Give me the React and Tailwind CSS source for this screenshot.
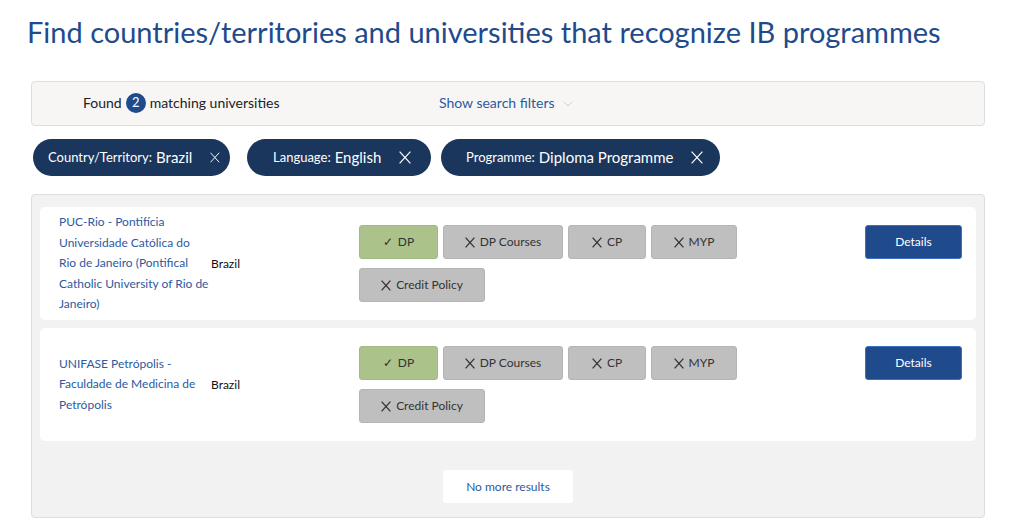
import { ChevronDown } from "lucide-react";

const results = [
  {
    lines: ["PUC-Rio - Pontifícia", "Universidade Católica do", "Rio de Janeiro (Pontifical", "Catholic University of Rio de", "Janeiro)"],
    country: "Brazil",
  },
  {
    lines: ["UNIFASE Petrópolis -", "Faculdade de Medicina de", "Petrópolis"],
    country: "Brazil",
  },
];

const tags = [
  { label: "DP", ok: true, w: "w-[79px]" },
  { label: "DP Courses", ok: false, w: "w-[120px]" },
  { label: "CP", ok: false, w: "w-[78px]" },
  { label: "MYP", ok: false, w: "w-[86px]" },
  { label: "Credit Policy", ok: false, w: "w-[126px]" },
];

function Cross({ w = 10, h = 11, stroke = 1.2, className = "" }) {
  return (
    <svg width={w} height={h} viewBox={`0 0 ${w} ${h}`} className={className} fill="none" stroke="currentColor" strokeWidth={stroke}>
      <path d={`M0.6 0.6 L${w - 0.6} ${h - 0.6} M${w - 0.6} 0.6 L0.6 ${h - 0.6}`} />
    </svg>
  );
}

function Tag({ tag }) {
  return (
    <div
      className={`${tag.w} h-[34px] flex items-center justify-center gap-[5px] rounded-[3px] border text-[12px] text-[#333] ${
        tag.ok ? "bg-[#abc28b] border-[#a3bb82]" : "bg-[#bfbfbf] border-[#b4b4b4]"
      }`}
    >
      {tag.ok ? <span className="text-[12px]">✓</span> : <Cross w={10} h={11} stroke={1.3} />}
      <span>{tag.label}</span>
    </div>
  );
}

function Pill({ label, value, className = "" }) {
  return (
    <div className={`h-[37px] flex items-center rounded-full bg-[#1b365d] text-white pl-[15px] pr-[10px] ${className}`}>
      <span className="text-[13px]">{label}:</span>
      <span className="text-[15px] ml-[4px]">{value}</span>
      <Cross w={12} h={13} stroke={1.2} className="ml-[18px]" />
    </div>
  );
}

export default function App() {
  return (
    <div className="w-[1024px] h-[528px] bg-white overflow-hidden font-['Lato',sans-serif]">
      <h1 className="pl-[27px] pt-[13px] text-[29px] leading-[37px] text-[#1f4b8c]">
        Find countries/territories and universities that recognize IB programmes
      </h1>

      <div className="w-[954px] ml-[31px] mt-[31px] h-[45px] flex items-center rounded-[4px] border border-[#dedede] bg-[#f7f6f5]">
        <div className="pl-[51px] w-[407px] flex items-center text-[14px] text-[#222] -mt-[2px]">
          <span>Found</span>
          <span className="mx-[4px] w-[20px] h-[20px] rounded-full bg-[#1f4b8c] text-white text-[13px] flex items-center justify-center">2</span>
          <span>matching universities</span>
        </div>
        <div className="flex items-center text-[14px] text-[#2c5aa0] -mt-[2px]">
          <span>Show search filters</span>
          <ChevronDown size={16} strokeWidth={1.2} className="ml-[5px] mt-[3px] text-[#c4c4c4]" />
        </div>
      </div>

      <div className="flex items-center ml-[33px] mt-[13px]">
        <Pill label="Country/Territory" value="Brazil" className="w-[197px]" />
        <Pill label="Language" value="English" className="ml-[17px] w-[184px] pl-[26px]" />
        <Pill label="Programme" value="Diploma Programme" className="ml-[10px] w-[279px] pl-[25px]" />
      </div>

      <div className="w-[954px] ml-[31px] mt-[18px] h-[324px] rounded-[4px] border border-[#dddddd] bg-[#f2f2f2] px-[8px] pt-[12px]">
        <div className="flex flex-col gap-[8px]">
          {results.map((r) => (
            <div key={r.lines[0]} className="h-[113px] bg-white rounded-[5px] flex items-center pl-[19px] pr-[14px]">
              <div className="w-[152px] text-[12px] leading-[20.5px] text-[#2c5aa0]">
                {r.lines.map((l) => (
                  <div key={l} className="whitespace-nowrap">{l}</div>
                ))}
              </div>
              <div className="w-[148px] text-[12px] text-[#111]">{r.country}</div>
              <div className="w-[390px] flex flex-wrap gap-x-[5px] gap-y-[9px] self-start mt-[18px]">
                {tags.map((t) => (
                  <Tag key={t.label} tag={t} />
                ))}
              </div>
              <div className="flex-1 flex justify-end self-start mt-[18px]">
                <button className="w-[97px] h-[34px] rounded-[3px] bg-[#1f4b8c] border border-[#3c6fbf] text-white text-[12px]">
                  Details
                </button>
              </div>
            </div>
          ))}
        </div>
        <div className="flex justify-center mt-[29px]">
          <div className="w-[130px] h-[33px] bg-white rounded-[3px] flex items-center justify-center text-[12px] text-[#2c5aa0]">
            No more results
          </div>
        </div>
      </div>
    </div>
  );
}
